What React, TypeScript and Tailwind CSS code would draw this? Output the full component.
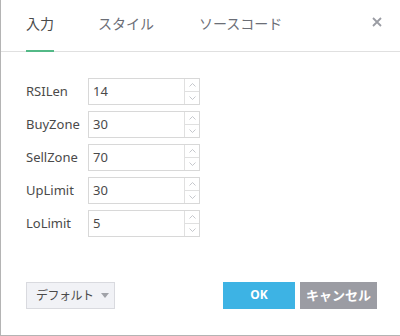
import React from "react";

const rows = [
  { label: "RSILen", value: "14" },
  { label: "BuyZone", value: "30" },
  { label: "SellZone", value: "70" },
  { label: "UpLimit", value: "30" },
  { label: "LoLimit", value: "5" },
];

const font = { fontFamily: '"Noto Sans", "Noto Sans CJK JP", sans-serif' };

export default function App() {
  return (
    <div
      className="w-[400px] h-[336px] bg-white border-l border-b border-[#b4b4b4] flex flex-col text-[#4a4a4a]"
      style={font}
    >
      <div className="relative h-[52px] border-b border-[#e0e0e0] flex items-end pl-[25px]">
        <div className="relative h-[51px] flex items-center pb-[4px] text-[14px] text-[#4a4a4a] mr-[44px]">
          入力
          <div className="absolute left-0 right-0 bottom-[-1px] h-[2px] bg-[#53b987]" />
        </div>
        <div className="h-[51px] flex items-center pb-[4px] text-[14px] text-[#6b6e76] mr-[45px]">スタイル</div>
        <div className="h-[51px] flex items-center pb-[4px] text-[14px] text-[#6b6e76]">ソースコード</div>
        <svg className="absolute left-[371px] top-[17px]" width="10" height="10" viewBox="0 0 10 10">
          <path d="M1 1L9 9M9 1L1 9" stroke="#9a9ca3" strokeWidth="1.8" />
        </svg>
      </div>
      <div className="flex flex-col gap-[6px] pt-[26px] pl-[25px]">
        {rows.map((r) => (
          <div key={r.label} className="flex items-center h-[27px]">
            <div className="w-[62px] text-[13px] text-[#4a4a4a]">{r.label}</div>
            <div className="flex w-[112px] h-[27px] border border-[#d8d8d8]">
              <div className="flex-1 flex items-center pl-[4px] text-[13px] text-[#4a4a4a]">{r.value}</div>
              <div className="w-[15px] border-l border-[#e0e0e0] flex flex-col">
                <div className="flex-1 flex items-center justify-center border-b border-[#e0e0e0]">
                  <svg width="7" height="4" viewBox="0 0 7 4">
                    <path d="M0.5 3.5L3.5 0.5L6.5 3.5" stroke="#b8bac0" strokeWidth="0.8" fill="none" />
                  </svg>
                </div>
                <div className="flex-1 flex items-center justify-center">
                  <svg width="7" height="4" viewBox="0 0 7 4">
                    <path d="M0.5 0.5L3.5 3.5L6.5 0.5" stroke="#b8bac0" strokeWidth="0.8" fill="none" />
                  </svg>
                </div>
              </div>
            </div>
          </div>
        ))}
      </div>
      <div className="flex-1" />
      <div className="flex items-center pl-[25px] pr-[23px] pb-[26px]">
        <div className="w-[89px] h-[27px] shrink-0 whitespace-nowrap bg-[#f1f2f6] border border-[#d9dadf] flex items-center pl-[9px] text-[12px] tracking-[-0.5px] text-[#4a4a4a]">
          デフォルト
          <svg className="ml-[7px] shrink-0" width="8" height="5" viewBox="0 0 8 5">
            <path d="M0 0H8L4 5Z" fill="#a0a2a8" />
          </svg>
        </div>
        <div className="flex-1" />
        <div className="w-[72px] h-[27px] bg-[#3db3e4] text-white text-[12px] font-bold flex items-center justify-center pb-[2px]">
          OK
        </div>
        <div className="w-[77px] h-[27px] ml-[5px] bg-[#9b9ca3] text-white text-[13px] font-bold flex items-center justify-center">
          キャンセル
        </div>
      </div>
    </div>
  );
}
